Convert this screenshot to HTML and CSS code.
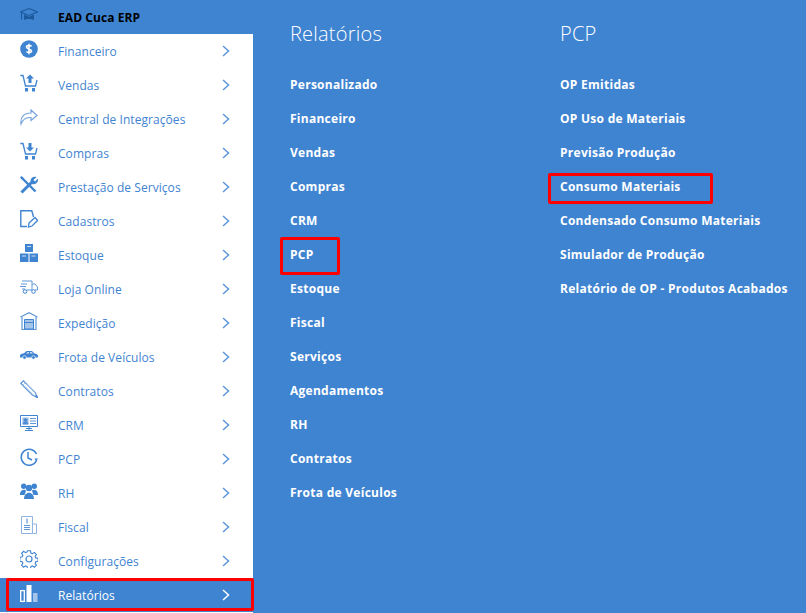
FILE: index.html
```html
<!DOCTYPE html>
<html lang="pt-BR">
<head>
<meta charset="utf-8">
<title>EAD Cuca ERP</title>
<link rel="stylesheet" href="styles.css">
</head>
<body>
<div class="app">
  <nav class="side">
    <div class="brand">
      <svg class="ico" viewBox="0 0 18 14"><path d="M9 .5 17.500 4 9 7.500.5 4z" fill="none" stroke="#1c5a9e" stroke-width="1.100"/><path d="M4 6.500v5.500c2-1.500 8-1.500 10 0V6.500L9 8.800z" fill="#1c5a9e"/><path d="M1.500 4.500v7" stroke="#1c5a9e" fill="none"/></svg>
      <span>EAD Cuca ERP</span>
    </div>
    <a class="row"><svg class="ico" viewBox="0 0 18 18"><circle cx="9" cy="9" r="8.800" fill="#3f84d1"/><path d="M11.500 6.500C11 5.300 6.500 5 6.500 7c0 2.300 5 1.500 5 4 0 2-4.500 1.700-5 .5M9 3.800v10.400" fill="none" stroke="#fff" stroke-width="1.600"/></svg><span class="lbl">Financeiro</span><svg class="chev" viewBox="0 0 8 12"><path d="M1 1 6.500 6 1 11"/></svg></a>
    <a class="row"><svg class="ico" viewBox="0 0 18 18"><path d="M.3 1.500h2.700l2.500 10.500h10l1.500-6" fill="none" stroke="#3f84d1" stroke-width="1.300"/><path d="M10 .5l4 4h-2.500V9h-3V4.500H6z" fill="#3f84d1"/><rect x="5" y="14" width="3" height="3.500" fill="#3f84d1"/><rect x="12" y="14" width="3" height="3.500" fill="#3f84d1"/></svg><span class="lbl">Vendas</span><svg class="chev" viewBox="0 0 8 12"><path d="M1 1 6.500 6 1 11"/></svg></a>
    <a class="row"><svg class="ico" viewBox="0 0 18 16"><path d="M11 1l6 5.500-6 5V8.500C6 8 3 10 1 15 0 8 4 4 11 4z" fill="none" stroke="#6f9fd8" stroke-width="1.100"/></svg><span class="lbl">Central de Integrações</span><svg class="chev" viewBox="0 0 8 12"><path d="M1 1 6.500 6 1 11"/></svg></a>
    <a class="row"><svg class="ico" viewBox="0 0 18 18"><path d="M.3 1.500h2.700l2.500 10.500h10l1.500-6" fill="none" stroke="#3f84d1" stroke-width="1.300"/><path d="M10 9.500l-4-4h2.500V1h3v4.500H14z" fill="#3f84d1"/><rect x="5" y="14" width="3" height="3.500" fill="#3f84d1"/><rect x="12" y="14" width="3" height="3.500" fill="#3f84d1"/></svg><span class="lbl">Compras</span><svg class="chev" viewBox="0 0 8 12"><path d="M1 1 6.500 6 1 11"/></svg></a>
    <a class="row"><svg class="ico" viewBox="0 0 18 18"><path d="M1.500 16.500 12 6" stroke="#3f84d1" stroke-width="3" fill="none"/><path d="M10.500 5c0-3.500 3.500-5 6-4l-3 3 1.500 1.500 3-3c1 3-2.500 7-6 5.500z" fill="#3f84d1"/><path d="M1.500 1.500 15.500 15.500" stroke="#3f84d1" stroke-width="2.400" fill="none"/><path d="M0 1.500 1.500 0 4 2.500 2.500 4z" fill="#3f84d1"/></svg><span class="lbl">Prestação de Serviços</span><svg class="chev" viewBox="0 0 8 12"><path d="M1 1 6.500 6 1 11"/></svg></a>
    <a class="row"><svg class="ico" viewBox="0 0 18 18"><path d="M7 16.500H.8V.8h11L13.500 7" fill="none" stroke="#3f84d1" stroke-width="1.400"/><path d="M8.500 17l.5-4 6-5.500 2.500 3-5.500 5.500z" fill="#fff" stroke="#3f84d1" stroke-width="1.300"/></svg><span class="lbl">Cadastros</span><svg class="chev" viewBox="0 0 8 12"><path d="M1 1 6.500 6 1 11"/></svg></a>
    <a class="row"><svg class="ico" viewBox="0 0 18 18"><path d="M5 0h8v8H5zM0 9.500h8.500V18H0zM9.500 9.500H18V18H9.500z" fill="#3f84d1"/><path d="M7 2.500h4M2 12h4M11.500 12h4" stroke="#cfe0f3" fill="none"/></svg><span class="lbl">Estoque</span><svg class="chev" viewBox="0 0 8 12"><path d="M1 1 6.500 6 1 11"/></svg></a>
    <a class="row"><svg class="ico" viewBox="0 0 18 14"><path d="M2 1h10v9H6.500M12 4h3l2.500 3v3H15M1 4h6M0 6.500h6M2 9h3" fill="none" stroke="#5f97d8"/><circle cx="5" cy="11.500" r="1.800" fill="#fff" stroke="#3f84d1"/><circle cx="13.500" cy="11.500" r="1.800" fill="#fff" stroke="#3f84d1"/></svg><span class="lbl">Loja Online</span><svg class="chev" viewBox="0 0 8 12"><path d="M1 1 6.500 6 1 11"/></svg></a>
    <a class="row"><svg class="ico" viewBox="0 0 18 18"><path d="M.5 5 9 .7 17.500 5M2 5v12.500h14V5" fill="none" stroke="#5f97d8" stroke-width="1.200"/><path d="M4.500 7.500h9V17h-9z" fill="#a5c4ea" stroke="#3f84d1"/><path d="M4.500 10.500h9" stroke="#3f84d1"/></svg><span class="lbl">Expedição</span><svg class="chev" viewBox="0 0 8 12"><path d="M1 1 6.500 6 1 11"/></svg></a>
    <a class="row"><svg class="ico" viewBox="0 0 18 9"><path d="M0 7V5c0-1.500 2.500-1.800 4-2.200L6.500.5h5.500L14.500 3c2 .2 3.500 1 3.500 2.500V7z" fill="#3f84d1"/><path d="M7.500 1.500h1.500V3H6zM10 1.500h1.500L13 3h-3z" fill="#cfe0f3"/><circle cx="4.500" cy="7" r="1.800" fill="#3f84d1" stroke="#fff" stroke-width=".6"/><circle cx="13.500" cy="7" r="1.800" fill="#3f84d1" stroke="#fff" stroke-width=".6"/></svg><span class="lbl">Frota de Veículos</span><svg class="chev" viewBox="0 0 8 12"><path d="M1 1 6.500 6 1 11"/></svg></a>
    <a class="row"><svg class="ico" viewBox="0 0 18 18"><path d="M.8 3.500 3.500.8l11.500 11.500 2.500 5.200-5.200-2.500z" fill="#fff" stroke="#5f97d8" stroke-width="1.200"/><path d="M2.500 5.500l3-3M4.500 6 13 14.500M7 4l8 8.500" stroke="#a5c4ea" fill="none"/><path d="M15.500 15.500l2 2" stroke="#3f84d1" stroke-width="1.500"/></svg><span class="lbl">Contratos</span><svg class="chev" viewBox="0 0 8 12"><path d="M1 1 6.500 6 1 11"/></svg></a>
    <a class="row"><svg class="ico" viewBox="0 0 18 16"><path d="M.5.500h17v11H.500z" fill="#fff" stroke="#3f84d1"/><rect x="2.500" y="2.500" width="6" height="7" fill="#8fb5e3"/><circle cx="5.500" cy="5" r="1.500" fill="#3f84d1"/><path d="M3 9c0-3 5-3 5 0zM10 3.500h6M10 6h6M10 8.500h6" fill="#3f84d1" stroke="#5f97d8"/><path d="M6 13.500h6M5 15.500h8" stroke="#3f84d1" fill="none"/><path d="M9 12v3" stroke="#3f84d1"/></svg><span class="lbl">CRM</span><svg class="chev" viewBox="0 0 8 12"><path d="M1 1 6.500 6 1 11"/></svg></a>
    <a class="row"><svg class="ico" viewBox="0 0 18 18"><path d="M16.500 12.500A8 8 0 1 1 16.500 6" fill="none" stroke="#3f84d1" stroke-width="1.500"/><path d="M8 4v6l4 2" fill="none" stroke="#3f84d1" stroke-width="1.500"/><path d="M14.500 10.500h3.500l-1.800 3z" fill="#3f84d1"/></svg><span class="lbl">PCP</span><svg class="chev" viewBox="0 0 8 12"><path d="M1 1 6.500 6 1 11"/></svg></a>
    <a class="row"><svg class="ico" viewBox="0 0 18 16"><circle cx="3.700" cy="3.300" r="2.700" fill="#3f84d1"/><circle cx="14.300" cy="3.300" r="2.700" fill="#3f84d1"/><circle cx="9" cy="5" r="3.200" fill="#3f84d1"/><path d="M0 11c0-4.500 5.500-5.500 6-3l-1.500 4H0zM18 11c0-4.500-5.500-5.500-6-3l1.500 4H18zM4 16c0-8.500 10-8.500 10 0z" fill="#3f84d1"/></svg><span class="lbl">RH</span><svg class="chev" viewBox="0 0 8 12"><path d="M1 1 6.500 6 1 11"/></svg></a>
    <a class="row"><svg class="ico" viewBox="0 0 18 18"><path d="M1.500.5h11v17h-11zM12.500 8h4v9.500h-4" fill="#fff" stroke="#8fb5e3"/><path d="M4 9.500h6M4 11.500h6M4 13.500h6" stroke="#5f97d8" fill="none"/><path d="M7 2.500v5" stroke="#3f84d1" fill="none"/></svg><span class="lbl">Fiscal</span><svg class="chev" viewBox="0 0 8 12"><path d="M1 1 6.500 6 1 11"/></svg></a>
    <a class="row"><svg class="ico" viewBox="0 0 18 18"><circle cx="9" cy="9" r="3" fill="none" stroke="#3f84d1" stroke-width="1.200"/><path d="M7.500.7h3l.4 2.300 1.500.7 2-1.300 2 2.100-1.300 1.900.7 1.500 2.300.5v2.900l-2.300.4-.7 1.500 1.300 2-2 2-2-1.300-1.500.7-.4 2.300h-3l-.4-2.300-1.500-.7-2 1.300-2-2 1.300-2-.7-1.500-2.300-.4V7.300l2.300-.5.700-1.500-1.300-1.900 2-2.100 2 1.300 1.500-.7z" fill="none" stroke="#3f84d1" stroke-width="1.100"/></svg><span class="lbl">Configurações</span><svg class="chev" viewBox="0 0 8 12"><path d="M1 1 6.500 6 1 11"/></svg></a>
    <a class="row active"><svg class="ico" viewBox="0 0 18 18"><path d="M.7 6.700h3.600v10.600H.7z" fill="none" stroke="#fff" stroke-width="1.300"/><rect x="6.500" y="1" width="5" height="17" fill="#fff"/><rect x="13" y="9" width="4.500" height="9" fill="#a5c4ea"/></svg><span class="lbl">Relatórios</span><svg class="chev" viewBox="0 0 8 12"><path d="M1 1 6.500 6 1 11"/></svg></a>
  </nav>
  <main class="panel">
    <section class="col col-a">
      <h2>Relatórios</h2>
      <ul>
        <li>Personalizado</li>
        <li>Financeiro</li>
        <li>Vendas</li>
        <li>Compras</li>
        <li>CRM</li>
        <li class="pcp">PCP</li>
        <li>Estoque</li>
        <li>Fiscal</li>
        <li>Serviços</li>
        <li>Agendamentos</li>
        <li>RH</li>
        <li>Contratos</li>
        <li>Frota de Veículos</li>
      </ul>
    </section>
    <section class="col col-b">
      <h2>PCP</h2>
      <ul>
        <li>OP Emitidas</li>
        <li>OP Uso de Materiais</li>
        <li>Previsão Produção</li>
        <li class="consumo">Consumo Materiais</li>
        <li>Condensado Consumo Materiais</li>
        <li>Simulador de Produção</li>
        <li>Relatório de OP - Produtos Acabados</li>
      </ul>
    </section>
  </main>
</div>
</body>
</html>
```
FILE: styles.css
```css
*, *::after { box-sizing: border-box; }
html, body { margin: 0; height: 100%; overflow: hidden; background: #3f84d1; }
body { font-family: "Open Sans", "Liberation Sans", sans-serif; font-size: 12px; }
.app { display: flex; width: 806px; height: 613px; overflow: hidden; background: #3f84d1; }
.side { width: 253px; flex: none; background: #fff; display: flex; flex-direction: column; }
.brand { height: 34px; background: #3f84d1; display: flex; align-items: center; padding-left: 20px; margin-right: -1px; color: #000; font-weight: 700; letter-spacing: .08px; }
.brand span { margin-left: 20px; }
.row { height: 34px; flex: none; display: flex; align-items: center; padding-left: 20px; color: #3f84d1; position: relative; }
.ico { width: 18px; height: 18px; flex: none; margin-top: -4px; }
.lbl { margin-left: 20px; flex: 1; letter-spacing: .06px; }
.chev { width: 8px; height: 12px; flex: none; margin-right: 23px; margin-top: -1px; fill: none; stroke: #5f97d8; stroke-width: 1.500; }
.active { background: #3f84d1; color: #fff; }
.active .chev { stroke: #fff; }
.active::after { content: ""; position: absolute; left: 6px; right: -1px; top: 0; bottom: 1px; border: 3px solid #f00; border-radius: 2px; }
.panel { flex: 1; display: flex; color: #fff; }
.col { flex: none; padding-top: 22px; }
.col-a { width: 270px; margin-left: 37px; }
.col-b { width: 246px; }
h2 { margin: 0; font-size: 20px; line-height: 24px; font-weight: 300; color: #fff; letter-spacing: .22px; }
ul { list-style: none; margin: 22px 0 0; padding: 0; }
li { height: 34px; line-height: 34px; font-weight: 700; letter-spacing: .27px; position: relative; white-space: nowrap; }
.pcp::after { content: ""; position: absolute; left: -10px; top: -1px; width: 60px; height: 38px; border: 3px solid #f00; border-radius: 2px; }
.consumo::after { content: ""; position: absolute; left: -12px; top: 3px; width: 165px; height: 31px; border: 3px solid #f00; border-radius: 2px; }
```
